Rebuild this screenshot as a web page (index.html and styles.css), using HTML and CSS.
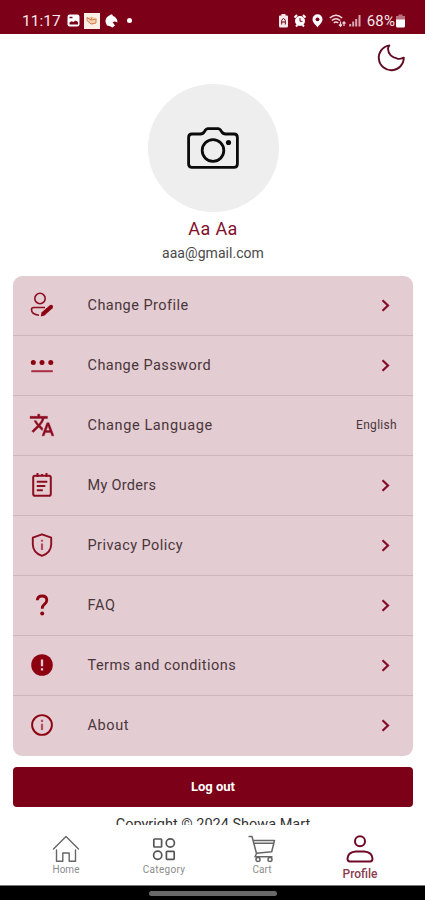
FILE: index.html
```html
<!DOCTYPE html>
<html lang="en">
<head>
<meta charset="utf-8">
<meta name="viewport" content="width=device-width, initial-scale=1">
<title>Profile</title>
<link rel="stylesheet" href="styles.css">
</head>
<body>
<div class="phone">
  <header class="status">
    <div class="status-left">
      <span class="clock">11:17</span>
      <svg class="s-photo" width="13" height="13" viewBox="0 0 13 13"><rect x=".5" y=".5" width="12" height="12" rx="2.2" fill="#fff"/><path d="M2.500 10.500V8.500l2-1.200 2 .7 2-1.500 2.500 1.500v2.500z" fill="#7b0018"/><path d="M2.500 3.500h3" stroke="#7b0018" stroke-width="1.500"/></svg>
      <svg class="s-app" width="16" height="16" viewBox="0 0 16 16"><path d="M0 0h16v16H0z" fill="#fbeee5"/><path d="M3 5l4-1.500 5 1.500v4l-3 3-4-2z" fill="#f7cdae"/><path d="M3 4.500l4 2.500 5.500-1M3 4.500v3l4 3.500 5-1V6M7 7l1-2.500" fill="none" stroke="#cf8052"/></svg>
      <svg class="s-bird" width="13" height="14" viewBox="0 0 13 14"><path d="M7 .3L8 2c2.500.5 4.500 3 4.500 6.500L10 7.500 7.500 8l2.500 3.500-2.500 2L4.500 12 2 11.500.5 8C.3 4 3 1.500 7 .3z" fill="#fff"/></svg>
      <i class="s-dot"></i>
    </div>
    <div class="status-right">
      <svg width="9" height="14" viewBox="0 0 9 14"><path d="M2.500 0h4v1.500H8q1 0 1 1V12q0 1.500-1.500 1.500h-6Q0 13.500 0 12V2.500q0-1 1-1h1.500z" fill="#f7e9eb"/><path d="M2.700 10.500V6.500q1.800-4 3.600 0v4M2.500 8h4" fill="none" stroke="#7b0018"/></svg>
      <svg width="12" height="13" viewBox="0 0 12 13"><path d="M.5 3.500L3 1M11.500 3.500L9 1M2 12.500l1.500-1.500M10 12.500L8.500 11" stroke="#fff" stroke-width="2"/><circle cx="6" cy="7" r="5" fill="#fff"/><path d="M6 4v3.300h2.500" fill="none" stroke="#7b0018"/></svg>
      <svg width="11" height="14" viewBox="0 0 11 14"><path d="M5.500.3A5 5 0 0 0 .5 5.300C.5 8.500 3.500 10.500 5.500 13.500c2-3 5-5 5-8.200a5 5 0 0 0-5-5z" fill="#fff"/><circle cx="5.500" cy="5.300" r="1.900" fill="#7b0018"/></svg>
      <svg width="17" height="14" viewBox="0 0 17 14"><g fill="none" stroke="#f1dadd" stroke-width="1.500"><path d="M.8 4q6.200-5.500 12.400 0M2.800 6.500q4.200-3.600 8.400 0M4.800 8.800q2.200-1.800 4.400 0"/><path d="M11.500 7.500v4.500M10 10.500l1.500 1.800 1.500-1.800M15 12V8M13.500 9.500L15 7.800l1.500 1.700" stroke-width="1.200"/></g></svg>
      <svg class="s-signal" width="12" height="13" viewBox="0 0 12 13"><path d="M1.200 12.500V10M4.200 12.500V7.500M7.200 12.500V5M10.500 12.500V1" stroke="#d9a7af" stroke-width="2"/></svg>
      <span class="percent">68%</span>
      <svg class="s-batt" width="9" height="14" viewBox="0 0 9 14"><path d="M2.500.5h4V2H9v4H0V2h2.500z" fill="#b96f7d"/><path d="M0 5.500h9v6.500q0 1.500-1.500 1.500h-6Q0 13.500 0 12z" fill="#fff"/></svg>
    </div>
  </header>

  <main class="content">
    <div class="toolbar">
      <svg width="30" height="30" viewBox="0 0 30 30"><path d="M13.300 2.400A12.500 12.500 0 1 0 27.800 14.600Q25.500 16.400 21.500 15.700 12.500 13.500 12 6 12 4 13.300 2.400z" fill="none" stroke="#5f0a20" stroke-width="1.900" stroke-linejoin="round"/></svg>
    </div>
    <div class="avatar">
      <svg width="52" height="42" viewBox="0 0 52 42"><g fill="none" stroke="#0b0b0b" stroke-width="2.800" stroke-linejoin="round"><path d="M5 7h8.500q2.500 0 4-2.500Q19 1.700 21 1.700h10q2 0 3.500 2.800Q36 7 38.500 7H47q3.400 0 3.400 3.400V37q0 3.300-3.400 3.300H5Q1.600 40.300 1.600 37V10.400Q1.600 7 5 7z"/><circle cx="26" cy="23.500" r="10.800"/></g><circle cx="41.500" cy="15.500" r="2.600" fill="#0b0b0b"/></svg>
    </div>
    <h1 class="name">Aa Aa</h1>
    <p class="email">aaa@gmail.com</p>

    <ul class="menu">
      <li><span class="icon"><svg width="26" height="26" viewBox="0 0 26 26"><g fill="none" stroke="#8d0d20" stroke-width="1.600"><circle cx="11" cy="6.500" r="5.200"/><path d="M16 15.500H5q-2.500 0-2.500 2 0 5 7.500 5.700"/></g><path d="M11.800 24.500l.7-4L20.800 13.300q1.500-1 2.700.2 1.200 1.400 0 2.700L15.500 23.500z" fill="#8d0010"/></svg></span><span class="label l-profile">Change Profile</span><svg class="chev" width="9" height="13" viewBox="0 0 9 13"><path d="M1.500 1.200L7 6.500l-5.500 5.300"/></svg></li>
      <li><span class="icon"><svg width="26" height="26" viewBox="0 0 26 26"><g fill="#8d0010"><circle cx="4.300" cy="10.600" r="2.500"/><circle cx="13" cy="10.600" r="2.500"/><circle cx="21.800" cy="10.600" r="2.500"/></g><path d="M2.300 19.200h21.500" stroke="#a92d42" stroke-width="2"/></svg></span><span class="label l-password">Change Password</span><svg class="chev" width="9" height="13" viewBox="0 0 9 13"><path d="M1.500 1.200L7 6.500l-5.500 5.300"/></svg></li>
      <li><span class="icon"><svg width="26" height="26" viewBox="0 0 24 24"><path d="M12.870 15.070l-2.540-2.510.03-.03A17.520 17.520 0 0 0 14.070 6H17V4h-7V2H8v2H1v2h11.170C11.500 7.920 10.440 9.750 9 11.350 8.070 10.320 7.300 9.190 6.690 8h-2c.73 1.630 1.730 3.170 2.980 4.560l-5.090 5.020L4 19l5-5 3.110 3.110.76-2.040zM18.500 10h-2L12 22h2l1.120-3h4.750L21 22h2l-4.500-12zm-2.620 7l1.620-4.330L19.120 17h-3.240z" fill="#8d0d20" stroke="#8d0d20" stroke-width=".4"/></svg></span><span class="label l-language">Change Language</span><span class="value">English</span></li>
      <li><span class="icon"><svg width="26" height="26" viewBox="0 0 26 26"><g fill="none" stroke="#8d0d20"><rect x="4.200" y="3.700" width="17.600" height="20" rx="1.800" stroke-width="2"/><path d="M8.500 1v4M17.500 1v4M13 2v2M7.800 9.700h10.500M7.800 14h8.500M7.800 18.200h6" stroke-width="2"/></g></svg></span><span class="label l-orders">My Orders</span><svg class="chev" width="9" height="13" viewBox="0 0 9 13"><path d="M1.500 1.200L7 6.500l-5.500 5.300"/></svg></li>
      <li><span class="icon"><svg width="26" height="26" viewBox="0 0 26 26"><path d="M13 2.300l9.200 3.400v6.500q0 8.300-9.200 11.700Q3.800 20.500 3.800 12.200V5.700z" fill="none" stroke="#8d0d20" stroke-width="1.900" stroke-linejoin="round"/><path d="M13 11.500V18M13 7.800v2" stroke="#b64b5f" stroke-width="2.200"/></svg></span><span class="label l-privacy">Privacy Policy</span><svg class="chev" width="9" height="13" viewBox="0 0 9 13"><path d="M1.500 1.200L7 6.500l-5.500 5.300"/></svg></li>
      <li><span class="icon"><svg width="26" height="26" viewBox="0 0 26 26"><path d="M8.300 8.300q.2-4.300 4.900-4.300 4.600 0 4.600 4.200 0 2-2.300 3.900-2.300 1.800-2.300 4.700" fill="none" stroke="#8d0010" stroke-width="2.800"/><circle cx="13.200" cy="21.500" r="2" fill="#8d0010"/></svg></span><span class="label l-faq">FAQ</span><svg class="chev" width="9" height="13" viewBox="0 0 9 13"><path d="M1.500 1.200L7 6.500l-5.500 5.300"/></svg></li>
      <li><span class="icon"><svg width="26" height="26" viewBox="0 0 26 26"><circle cx="13" cy="13" r="10.800" fill="#8d0010"/><path d="M13 7.500v6.800M13 16.300v2.300" stroke="#e8c9ce" stroke-width="2.300"/></svg></span><span class="label l-terms">Terms and conditions</span><svg class="chev" width="9" height="13" viewBox="0 0 9 13"><path d="M1.500 1.200L7 6.500l-5.500 5.300"/></svg></li>
      <li><span class="icon"><svg width="26" height="26" viewBox="0 0 26 26"><circle cx="13" cy="13" r="9.900" fill="none" stroke="#8d0010" stroke-width="1.900"/><path d="M13 11.800V18M13 7.800v2.300" stroke="#b64b5f" stroke-width="2.200"/></svg></span><span class="label l-about">About</span><svg class="chev" width="9" height="13" viewBox="0 0 9 13"><path d="M1.500 1.200L7 6.500l-5.500 5.300"/></svg></li>
    </ul>

    <button class="logout" type="button">Log out</button>
    <p class="copyright">Copyright © 2024 Showa Mart</p>
  </main>

  <nav class="tabs">
    <a class="tab"><svg width="28" height="28" viewBox="0 0 28 28"><g fill="none" stroke="#666" stroke-width="1.400" stroke-linejoin="round" stroke-linecap="round"><path d="M1.500 14L14 1.500 26.500 14"/><path d="M4.500 15v11.300h6.300V18h6.400v8.300h6.300V15"/></g></svg><span>Home</span></a>
    <a class="tab"><svg width="28" height="28" viewBox="0 0 28 28"><g fill="none" stroke="#555" stroke-width="1.700"><rect x="3.800" y="4" width="7.800" height="8" rx=".8"/><circle cx="20.300" cy="8" r="4.100"/><circle cx="7.700" cy="20.300" r="4.100"/><rect x="16.400" y="16.300" width="7.800" height="8" rx=".8"/></g></svg><span class="t-category">Category</span></a>
    <a class="tab"><svg width="28" height="28" viewBox="0 0 28 28"><g fill="none" stroke="#666" stroke-width="1.500" stroke-linejoin="round"><path d="M.5 1.500H4l4.500 17L7 21.700h17.500M5.200 5.500h21.300l-2.800 11.200L8.200 18.300M6 8.300h19.500"/><circle cx="10" cy="24.500" r="2"/><circle cx="22" cy="24.500" r="2"/></g></svg><span>Cart</span></a>
    <a class="tab active"><svg width="28" height="28" viewBox="0 0 28 28"><g fill="none" stroke="#6e0a25" stroke-width="2"><circle cx="14" cy="6.200" r="5"/><path d="M10 16.500h8q8 .5 8.500 7 0 3-2.500 3H4q-2.500 0-2.500-3 .5-6.500 8.500-7z"/></g></svg><span>Profile</span></a>
  </nav>
  <footer class="gesture"><i></i></footer>
</div>
</body>
</html>
```

FILE: styles.css
```css
* {
  box-sizing: border-box;
}

body {
  margin: 0;
  background: #fff;
  font-family: Roboto, "Liberation Sans", sans-serif;
  color: #49363c;
}

.phone {
  width: 425px;
  height: 900px;
  display: flex;
  flex-direction: column;
  overflow: hidden;
}

svg {
  display: block;
  flex: none;
}

.status {
  height: 34px;
  flex: none;
  display: flex;
  justify-content: space-between;
  padding: 7px 20px 0 22px;
  background: #7b0018;
  color: #f8e8ea;
}

.status-left,
.status-right {
  display: flex;
  align-items: center;
  height: 27px;
}

.clock {
  width: 45px;
  font-size: 15.500px;
}

.s-app {
  margin-left: 4px;
}

.s-bird {
  margin-left: 5px;
}

.s-dot {
  width: 5px;
  height: 5px;
  margin-left: 9px;
  border-radius: 50%;
  background: #fff;
}

.status-right {
  gap: 6px;
}

.s-signal {
  margin-left: -3px;
}

.percent {
  font-size: 15px;
  letter-spacing: 0.1px;
}

.s-batt {
  margin-left: -5px;
}

.content {
  height: 791px;
  flex: none;
  padding: 0 12px 0 13px;
  overflow: hidden;
  display: flex;
  flex-direction: column;
  align-items: center;
}

.toolbar {
  width: 100%;
  height: 50px;
  flex: none;
  display: flex;
  justify-content: flex-end;
  padding: 9px 7px 0 0;
}

.avatar {
  width: 131px;
  height: 128px;
  flex: none;
  display: flex;
  align-items: center;
  justify-content: center;
  border-radius: 50%;
  background: #eee;
}

.name {
  margin: 6px 0 0;
  height: 22px;
  font-size: 18px;
  font-weight: 400;
  line-height: 22px;
  letter-spacing: 0.4px;
  color: #82102a;
}

.email {
  margin: 4px 0 0;
  height: 18px;
  font-size: 14px;
  line-height: 18px;
  letter-spacing: 0.050px;
  color: #494949;
}

.menu {
  width: 400px;
  height: 480px;
  flex: none;
  margin: 14px 0 11px;
  padding: 0;
  list-style: none;
  border-radius: 9px;
  background: #e4cdd2;
}

.menu li {
  height: 60px;
  display: flex;
  align-items: center;
  padding: 0 16px 1px;
  border-bottom: 1px solid #cfb6bd;
}

.menu li:last-child {
  padding-bottom: 2px;
  border-bottom: 0;
}

.icon {
  width: 58px;
}

.label {
  flex: 1;
  padding-left: 0.500px;
  font-size: 14.500px;
  letter-spacing: 0.450px;
}

.l-language,
.l-faq,
.l-about {
  letter-spacing: 0.600px;
}

.l-orders {
  letter-spacing: 0.300px;
}

.chev {
  margin-right: 7px;
  fill: none;
  stroke: #850b28;
  stroke-width: 2.2;
}

.value {
  font-size: 12px;
  letter-spacing: 0.300px;
}

.logout {
  width: 400px;
  height: 40px;
  flex: none;
  padding: 0 0 1px;
  border: 0;
  border-radius: 4px;
  background: #7b0018;
  color: #fff;
  font: 700 13px Roboto, "Liberation Sans", sans-serif;
}

.copyright {
  margin: 8px 0 0;
  font-size: 14.500px;
  line-height: 20px;
  white-space: nowrap;
  color: #333;
}

.tabs {
  height: 60px;
  flex: none;
  display: grid;
  grid-template-columns: repeat(4, 98px);
  padding: 10px 0 0 17px;
  background: #fff;
}

.tab {
  display: flex;
  flex-direction: column;
  align-items: center;
  font-size: 10px;
  line-height: 12px;
  color: #8c8c8c;
}

.tab span {
  margin-top: 1px;
}

.tab .t-category {
  letter-spacing: 0.300px;
}

.tab.active {
  font-size: 12px;
  line-height: 14px;
  color: #8d3b50;
}

.tab.active span {
  margin-top: 4px;
  font-weight: 500;
}

.gesture {
  height: 15px;
  flex: none;
  display: flex;
  justify-content: center;
  padding-top: 5px;
  background: #000;
  border-top: 1px solid #777;
}

.gesture i {
  width: 128px;
  height: 5px;
  border-radius: 3px;
  background: #696969;
}
```
